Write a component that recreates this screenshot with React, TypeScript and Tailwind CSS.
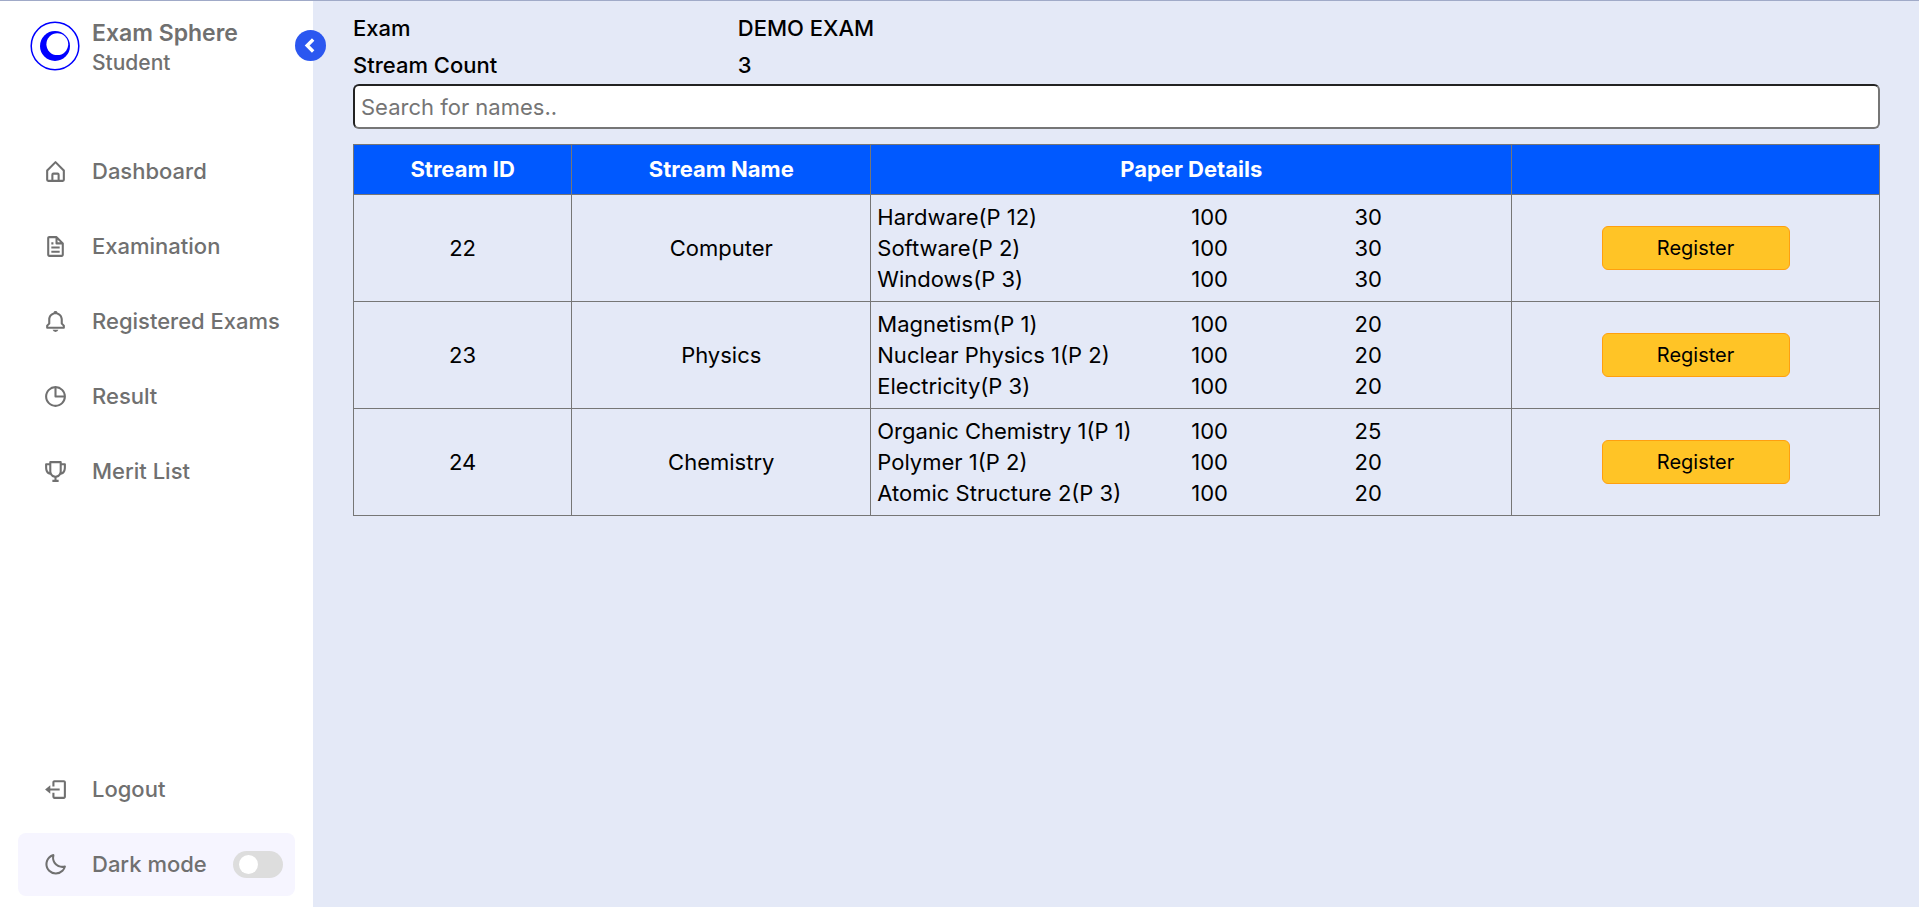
import { useState } from 'react';
import {
  BiBell,
  BiChevronLeft,
  BiFile,
  BiHomeAlt,
  BiLogOut,
  BiMoon,
  BiPieChartAlt,
  BiTrophy,
} from 'react-icons/bi';
import type { IconType } from 'react-icons';

type Paper = { name: string; total: number; pass: number };
type Stream = { id: number; name: string; papers: Paper[] };

const links: { label: string; icon: IconType }[] = [
  { label: 'Dashboard', icon: BiHomeAlt },
  { label: 'Examination', icon: BiFile },
  { label: 'Registered Exams', icon: BiBell },
  { label: 'Result', icon: BiPieChartAlt },
  { label: 'Merit List', icon: BiTrophy },
];

const streams: Stream[] = [
  {
    id: 22,
    name: 'Computer',
    papers: [
      { name: 'Hardware(P 12)', total: 100, pass: 30 },
      { name: 'Software(P 2)', total: 100, pass: 30 },
      { name: 'Windows(P 3)', total: 100, pass: 30 },
    ],
  },
  {
    id: 23,
    name: 'Physics',
    papers: [
      { name: 'Magnetism(P 1)', total: 100, pass: 20 },
      { name: 'Nuclear Physics 1(P 2)', total: 100, pass: 20 },
      { name: 'Electricity(P 3)', total: 100, pass: 20 },
    ],
  },
  {
    id: 24,
    name: 'Chemistry',
    papers: [
      { name: 'Organic Chemistry 1(P 1)', total: 100, pass: 25 },
      { name: 'Polymer 1(P 2)', total: 100, pass: 20 },
      { name: 'Atomic Structure 2(P 3)', total: 100, pass: 20 },
    ],
  },
];

function Logo() {
  return (
    <svg viewBox="0 0 50 50" className="size-[50px]" aria-hidden="true">
      <circle cx="25" cy="25" r="23.8" fill="none" stroke="#0000ff" strokeWidth="1.5" />
      <circle cx="25" cy="25" r="15" fill="#0000ff" />
      <circle cx="27.3" cy="23.2" r="10.9" fill="#fff" />
    </svg>
  );
}

function NavLink({ label, icon: Icon }: { label: string; icon: IconType }) {
  return (
    <a href="#" className="flex h-[63px] items-center rounded-lg">
      <span className="flex w-[74px] shrink-0 justify-center">
        <Icon className="size-[25px]" />
      </span>
      <span className="whitespace-nowrap">{label}</span>
    </a>
  );
}

function Sidebar() {
  const [dark, setDark] = useState(false);
  return (
    <aside className="relative flex w-[313px] shrink-0 flex-col bg-white px-[18px] pt-[17px] pb-[11px] font-medium text-[#707070]">
      <header className="flex items-start">
        <span className="flex w-[74px] shrink-0 justify-center pt-[3px]">
          <Logo />
        </span>
        <div>
          <p className="text-[23px] leading-[30px] font-semibold">Exam Sphere</p>
          <p className="text-[21px] leading-[30px]">Student</p>
        </div>
      </header>
      <button
        type="button"
        aria-label="Collapse sidebar"
        className="absolute top-[29px] -right-[13px] flex size-[31px] items-center justify-center rounded-full bg-[#2b57f0] text-white"
      >
        <BiChevronLeft className="size-[27px] stroke-current stroke-1" />
      </button>
      <nav className="mt-[62px] flex flex-1 flex-col justify-between text-[22px]">
        <ul className="flex flex-col gap-3">
          {links.map((l) => (
            <li key={l.label}>
              <NavLink {...l} />
            </li>
          ))}
        </ul>
        <div className="flex flex-col gap-3">
          <NavLink label="Logout" icon={BiLogOut} />
          <label className="flex h-[63px] items-center rounded-lg bg-[#f6f5ff] pr-3">
            <span className="flex w-[74px] shrink-0 justify-center">
              <BiMoon className="size-[25px]" />
            </span>
            <span className="flex-1 whitespace-nowrap">Dark mode</span>
            <input
              type="checkbox"
              role="switch"
              checked={dark}
              onChange={(e) => setDark(e.target.checked)}
              className="h-[27px] w-[50px] appearance-none rounded-full bg-[#ddd] px-1.5 before:mt-1 before:block before:size-[19px] before:rounded-full before:bg-white checked:before:ml-auto"
            />
          </label>
        </div>
      </nav>
    </aside>
  );
}

export default function App() {
  const [query, setQuery] = useState('');
  const shown = streams.filter((s) => s.name.toLowerCase().includes(query.toLowerCase()));

  return (
    <div className="flex min-h-screen border-t border-[#a0aac8] bg-[#e4e9f7] font-['Inter',sans-serif]">
      <Sidebar />
      <main className="min-w-0 flex-1 pt-[9px] pr-[39px] pl-10 text-[22px] text-black">
        <dl className="grid grid-cols-[25.2%_1fr] leading-[37px] font-medium">
          <dt>Exam</dt>
          <dd>DEMO EXAM</dd>
          <dt>Stream Count</dt>
          <dd>3</dd>
        </dl>
        <input
          type="text"
          aria-label="Search for names"
          placeholder="Search for names.."
          value={query}
          onChange={(e) => setQuery(e.target.value)}
          className="block h-[45px] w-full rounded-md border-2 border-t-[#222] border-r-[#767676] border-b-[#767676] border-l-[#222] bg-white px-1.5 placeholder:text-[#757575]"
        />
        <table className="mt-[15px] w-full table-fixed border-collapse text-center">
          <colgroup>
            <col className="w-[14.3%]" />
            <col className="w-[19.6%]" />
            <col className="w-[42%]" />
            <col />
          </colgroup>
          <thead className="bg-[#0059ff] text-white">
            <tr className="h-[50px]">
              <th className="border border-[#767676] font-bold">Stream ID</th>
              <th className="border border-[#767676] font-bold">Stream Name</th>
              <th className="border border-[#767676] font-bold">Paper Details</th>
              <th className="border border-[#767676]" />
            </tr>
          </thead>
          <tbody>
            {shown.map((s) => (
              <tr key={s.id} className="h-[107px]">
                <td className="border border-[#767676]">{s.id}</td>
                <td className="border border-[#767676]">{s.name}</td>
                <td className="border border-[#767676] px-1.5">
                  <table className="w-full table-fixed text-left leading-[31px]">
                    <colgroup>
                      <col className="w-[50%]" />
                      <col className="w-[26%]" />
                      <col />
                    </colgroup>
                    <tbody>
                      {s.papers.map((p) => (
                        <tr key={p.name}>
                          <td>{p.name}</td>
                          <td>{p.total}</td>
                          <td>{p.pass}</td>
                        </tr>
                      ))}
                    </tbody>
                  </table>
                </td>
                <td className="border border-[#767676]">
                  <button
                    type="button"
                    className="mx-auto block h-11 w-[188px] rounded-md border border-[#ff9f0f] bg-[#ffc426] text-[20px]"
                  >
                    Register
                  </button>
                </td>
              </tr>
            ))}
          </tbody>
        </table>
      </main>
    </div>
  );
}
